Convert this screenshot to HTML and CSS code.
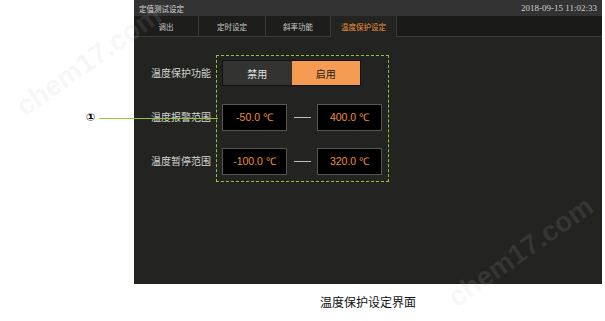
FILE: index.html
```html
<!DOCTYPE html>
<html lang="zh">
<head>
    <meta charset="UTF-8">
    <meta name="viewport" content="width=device-width, initial-scale=1.0">
    <title>温度保护设定界面</title>
    <link rel="stylesheet" href="styles.css">
</head>
<body>
    <div class="figure">
        <div class="panel">
            <div class="titlebar">
                <span class="title">定值测试设定</span>
                <span class="clock">2018-09-15 11:02:33</span>
            </div>
            <div class="tabs">
                <div class="tab t1">调出</div>
                <div class="tab t2">定时设定</div>
                <div class="tab t3">斜率功能</div>
                <div class="tab t4 active">温度保护设定</div>
                <div class="tab-fill"></div>
            </div>
            <div class="content">
                <div class="labels">
                    <div class="label">温度保护功能</div>
                    <div class="label">温度报警范围</div>
                    <div class="label">温度暂停范围</div>
                </div>
                <div class="box">
                    <div class="row">
                        <div class="toggle">
                            <div class="opt">禁用</div>
                            <div class="opt on">启用</div>
                        </div>
                    </div>
                    <div class="row">
                        <div class="field">-50.0 ℃</div>
                        <div class="dash"></div>
                        <div class="field">400.0 ℃</div>
                    </div>
                    <div class="row">
                        <div class="field">-100.0 ℃</div>
                        <div class="dash"></div>
                        <div class="field">320.0 ℃</div>
                    </div>
                </div>
            </div>
        </div>
        <div class="caption">温度保护设定界面</div>
    </div>

    <!-- callout -->
    <div class="callout">
        <span class="num">①</span>
        <span class="line"></span>
    </div>

    <div class="mark mark-a">chem17.com</div>
    <div class="mark mark-b">chem17.com</div>
</body>
</html>
```

FILE: styles.css
```css
body {
    margin: 0;
    background: #fff;
    font-family: "Noto Sans CJK SC", "Liberation Sans", sans-serif;
    position: relative;
    width: 605px;
    height: 321px;
    overflow: hidden;
}
.figure {
    margin-left: 134px;
    width: 468px;
}
.panel {
    height: 284px;
    background: #232421;
}
.titlebar {
    height: 16px;
    background: #333333;
    display: flex;
    justify-content: space-between;
    align-items: center;
    padding: 0 5px 0 5px;
    color: #d6d6d6;
}
.title {
    font-size: 7.5px;
}
.clock {
    font-family: "Liberation Serif", serif;
    font-size: 9px;
    color: #d0d0d0;
}
.tabs {
    height: 21px;
    display: flex;
}
.tab {
    box-sizing: border-box;
    height: 21px;
    background: #1d1e1c;
    border-right: 1px solid #3a3b39;
    border-bottom: 1px solid #3a3b39;
    color: #c8c8c8;
    font-size: 7.5px;
    display: flex;
    justify-content: center;
    align-items: center;
}
.t1 { width: 65px; }
.t2 { width: 67px; }
.t3 { width: 65px; }
.t4 { width: 66px; }
.tab.active {
    background: #232421;
    border-bottom: none;
    color: #f0913e;
}
.tab-fill {
    flex: 1;
    background: #1a1b19;
    border-bottom: 1px solid #3a3b39;
}
.content {
    display: flex;
    padding-top: 18px;
    padding-left: 17px;
}
.labels {
    width: 61px;
    padding-top: 5px;
    display: flex;
    flex-direction: column;
    gap: 18px;
}
.label {
    height: 26px;
    line-height: 26px;
    font-size: 10px;
    color: #d4d4d4;
    white-space: nowrap;
}
.box {
    margin-left: 4px;
    width: 173px;
    height: 127px;
    box-sizing: border-box;
    border: 1px dashed #8cc43c;
    padding: 4px 0 0 5px;
    display: flex;
    flex-direction: column;
    gap: 18px;
}
.row {
    height: 26px;
    display: flex;
    align-items: center;
}
.toggle {
    display: flex;
    width: 139px;
    height: 26px;
    box-sizing: border-box;
    border: 1px solid #111;
}
.opt {
    flex: 1;
    background: #333432;
    color: #e0e0e0;
    font-size: 10px;
    display: flex;
    justify-content: center;
    align-items: center;
}
.opt.on {
    background: #f59c52;
    color: #1a1a1a;
}
.field {
    width: 65px;
    height: 27px;
    box-sizing: border-box;
    background: #000;
    border: 1px solid #555;
    color: #ee8f3c;
    font-family: "Liberation Sans", sans-serif;
    font-size: 10.5px;
    display: flex;
    justify-content: center;
    align-items: center;
}
.dash {
    width: 17px;
    height: 1px;
    background: #bdbdbd;
    margin: 0 6px 0 7px;
}
.caption {
    text-align: center;
    font-size: 12px;
    color: #111;
    padding-top: 9px;
}
.callout {
    position: absolute;
    left: 86px;
    top: 111px;
    display: flex;
    align-items: center;
}
.num {
    font-family: "DejaVu Sans", sans-serif;
    font-size: 11px;
    font-weight: bold;
    color: #000;
    line-height: 14px;
}
.line {
    display: block;
    width: 119px;
    height: 1px;
    background: #8cc43c;
    margin-left: 4px;
}
.mark {
    position: absolute;
    font-family: "Liberation Sans", sans-serif;
    font-size: 28px;
    font-weight: bold;
    color: rgba(190, 190, 190, 0.12);
    transform: rotate(-35deg);
    white-space: nowrap;
    pointer-events: none;
}
.mark-a {
    left: 4px;
    top: 45px;
}
.mark-b {
    left: 436px;
    top: 236px;
}
```
